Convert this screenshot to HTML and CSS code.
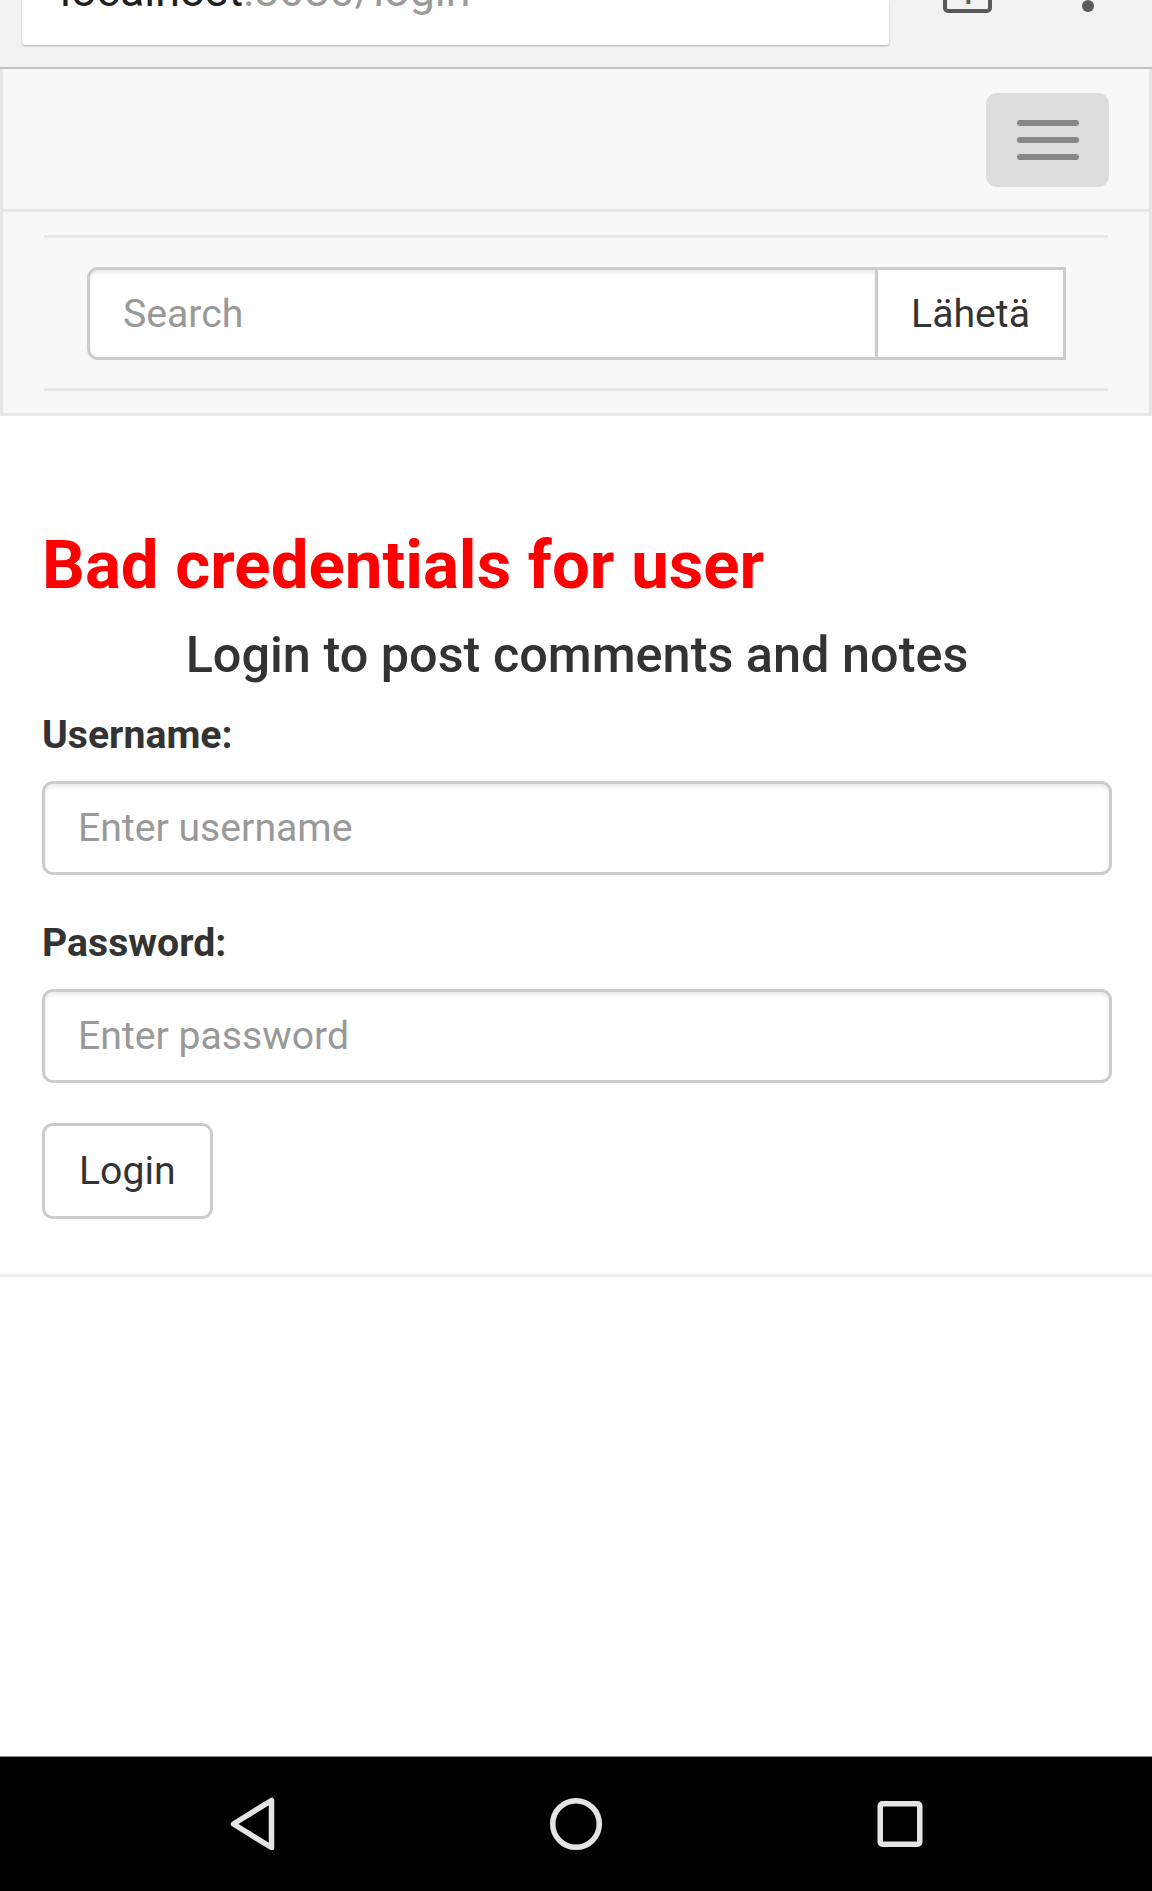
FILE: index.html
```html
<!DOCTYPE html>
<html lang="fi">
<head>
<meta charset="utf-8">
<title>Login</title>
<link rel="stylesheet" href="styles.css">
</head>
<body>
<div class="chrome">
  <div class="omnibox"><div class="url"><span class="host">localhost</span><span class="path">:8080/login</span></div></div>
  <div class="tabs-icon"><span class="tab-count">1</span></div>
  <div class="menu-dot"></div>
</div>

<nav class="navbar">
  <div class="navbar-header">
    <button class="navbar-toggle" type="button" aria-label="Toggle navigation">
      <span class="icon-bar"></span>
      <span class="icon-bar"></span>
      <span class="icon-bar"></span>
    </button>
  </div>
  <div class="navbar-collapse">
    <form class="navbar-form">
      <div class="input-group">
        <input class="search-input" type="text" placeholder="Search">
        <button class="search-btn" type="button">Lähetä</button>
      </div>
    </form>
  </div>
</nav>

<main class="container">
  <h3 class="error">Bad credentials for user</h3>
  <h4 class="subtitle">Login to post comments and notes</h4>
  <form class="login-form">
    <div class="form-group">
      <label class="form-label" for="username">Username:</label>
      <input class="form-control" id="username" type="text" placeholder="Enter username">
    </div>
    <div class="form-group">
      <label class="form-label" for="password">Password:</label>
      <input class="form-control" id="password" type="password" placeholder="Enter password">
    </div>
    <button class="btn" type="button">Login</button>
  </form>
</main>
<hr class="rule">

<div class="spacer"></div>

<div class="android-nav">
  <div class="nav-slot">
    <svg width="60" height="60" viewBox="0 0 60 60"><path d="M11.5 30 L49.5 6.5 L49.5 53.5 Z" fill="none" stroke="#e4e4e4" stroke-width="5.5" stroke-linejoin="round"/></svg>
  </div>
  <div class="nav-slot">
    <svg width="60" height="60" viewBox="0 0 60 60"><circle cx="30" cy="30" r="23.3" fill="none" stroke="#e4e4e4" stroke-width="5.5"/></svg>
  </div>
  <div class="nav-slot">
    <svg width="60" height="60" viewBox="0 0 60 60"><rect x="10.25" y="9.75" width="39.5" height="40.5" rx="2" fill="none" stroke="#e4e4e4" stroke-width="5.5"/></svg>
  </div>
</div>
</body>
</html>
```

FILE: styles.css
```css
* { box-sizing: border-box; }

html, body {
  margin: 0;
  padding: 0;
}

body {
  width: 1152px;
  height: 1891px;
  display: flex;
  flex-direction: column;
  font-family: Roboto, "Liberation Sans", Arial, sans-serif;
  color: #333;
  background: #fff;
  overflow: hidden;
}

/* ---------- browser chrome ---------- */
.chrome {
  height: 69px;
  flex: none;
  background: #f2f2f2;
  border-bottom: 2px solid #c2c2c2;
  display: flex;
  align-items: flex-start;
}

.omnibox {
  margin-left: 22px;
  width: 867px;
  height: 45px;
  background: #fff;
  border-radius: 0 0 3px 3px;
  box-shadow: 0 1px 2px rgba(0, 0, 0, 0.28);
  overflow: hidden;
}

.url {
  margin-top: -31px;
  margin-left: 38px;
  font-size: 44.8px;
  line-height: 1;
  white-space: nowrap;
}

.host { color: #202020; }
.path { color: #9a9a9a; }

.tabs-icon {
  margin-left: 54px;
  margin-top: -35px;
  width: 49px;
  height: 48px;
  border: 4.5px solid #5a5a5a;
  border-radius: 5px;
  display: flex;
  justify-content: center;
  align-items: flex-end;
  padding-bottom: 1px;
}

.tab-count {
  font-size: 26px;
  line-height: 1;
  font-weight: 700;
  color: #5a5a5a;
}

.menu-dot {
  margin-left: 90px;
  width: 12px;
  height: 12px;
  border-radius: 50%;
  background: #5a5a5a;
}

/* ---------- navbar ---------- */
.navbar {
  flex: none;
  background: #f8f8f8;
  border-left: 3px solid #e7e7e7;
  border-right: 3px solid #e7e7e7;
  border-bottom: 3px solid #e7e7e7;
}

.navbar-header {
  height: 143px;
  border-bottom: 3px solid #e7e7e7;
  display: flex;
  justify-content: flex-end;
  align-items: flex-start;
  padding-right: 40px;
  padding-top: 24px;
}

.navbar-toggle {
  width: 123px;
  height: 94px;
  background: #ddd;
  border: none;
  border-radius: 11px;
  display: flex;
  flex-direction: column;
  align-items: center;
  justify-content: center;
  gap: 11px;
  padding: 0;
}

.icon-bar {
  display: block;
  width: 62px;
  height: 6px;
  border-radius: 3px;
  background: #888;
}

.navbar-collapse {
  padding: 23px 41px 22px;
}

.navbar-form {
  margin: 0;
  border-top: 3px solid #e7e7e7;
  border-bottom: 3px solid #e7e7e7;
  padding: 29px 42px 28px 43px;
}

.input-group {
  display: flex;
  height: 93px;
}

.search-input {
  flex: 1;
  height: 93px;
  margin: 0;
  border: 3px solid #ccc;
  border-right: none;
  border-radius: 11px 0 0 11px;
  padding: 0 33px;
  font-family: inherit;
  font-size: 39.2px;
  color: #555;
  background: #fff;
  box-shadow: inset 0 3px 3px rgba(0, 0, 0, 0.075);
  outline: none;
}

.search-input::placeholder { color: #999; }

.search-btn {
  width: 191px;
  height: 93px;
  margin: 0;
  border: 3px solid #ccc;
  border-radius: 0;
  background: #fff;
  font-family: inherit;
  font-size: 39.2px;
  color: #333;
  padding: 0;
}

/* ---------- content ---------- */
.container {
  flex: none;
  padding: 0 40px 0 42px;
  margin-top: 112px;
}

.error {
  margin: 0;
  font-size: 67.2px;
  line-height: 74px;
  font-weight: 700;
  color: #f00;
}

.subtitle {
  margin: 25px 0 0;
  font-size: 50.4px;
  line-height: 55px;
  font-weight: 500;
  text-align: center;
  color: #333;
}

.login-form {
  margin-top: 25px;
}

.form-group {
  margin-bottom: 40px;
}

.form-label {
  display: block;
  font-size: 39.2px;
  line-height: 56px;
  font-weight: 700;
  color: #333;
  margin-bottom: 18px;
}

.form-control {
  display: block;
  width: 100%;
  height: 94px;
  margin: 0;
  padding: 0 33px;
  border: 3px solid #ccc;
  border-radius: 11px;
  font-family: inherit;
  font-size: 39.2px;
  color: #555;
  background: #fff;
  box-shadow: inset 0 3px 3px rgba(0, 0, 0, 0.075);
  outline: none;
}

.form-control::placeholder { color: #999; }

.btn {
  display: block;
  margin-top: 9px;
  height: 96px;
  padding: 0 34px;
  border: 3px solid #ccc;
  border-radius: 11px;
  background: #fff;
  font-family: inherit;
  font-size: 39.2px;
  color: #333;
}

.rule {
  flex: none;
  margin: 55px 0 0;
  border: none;
  border-top: 3px solid #eee;
  height: 0;
}

.spacer { flex: 1; }

/* ---------- android nav bar ---------- */
.android-nav {
  flex: none;
  height: 135px;
  background: #000;
  border-top: 1px solid #8a8a8a;
  display: flex;
  align-items: center;
  padding: 0 90px;
}

.nav-slot {
  flex: 1;
  display: flex;
  justify-content: center;
  align-items: center;
}

.nav-slot svg { display: block; }
```
